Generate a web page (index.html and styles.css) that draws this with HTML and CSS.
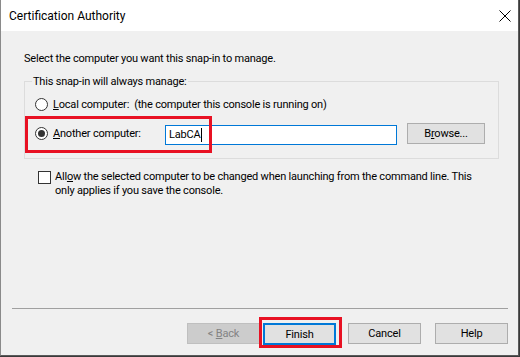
FILE: index.html
```html
<!DOCTYPE html>
<html lang="en">
<head>
  <meta charset="UTF-8" />
  <title>Certification Authority</title>
  <link rel="stylesheet" href="styles.css">
</head>
<body>
  <div class="window">
    <div class="titlebar">
      <span class="title">Certification Authority</span>
      <svg class="close" width="12" height="12" viewBox="0 0 12 12">
        <path d="M0.5 0.5 L11.5 11.5 M11.5 0.5 L0.5 11.5" stroke="#000" stroke-width="1" fill="none"/>
      </svg>
    </div>

    <div class="content">
      <p class="intro">Select the computer you want this snap-in to manage.</p>

      <fieldset class="group">
        <legend>This snap-in will always manage:</legend>

        <div class="option">
          <span class="radio"></span>
          <span class="label"><u>L</u>ocal computer:&nbsp; (the computer this console is running on)</span>
        </div>

        <div class="option option-remote">
          <span class="radio checked"></span>
          <span class="label label-fixed"><u>A</u>nother computer:</span>
          <div class="textbox">LabCA<span class="caret"></span></div>
          <button class="btn btn-browse">B<u>r</u>owse...</button>
          <!-- annotation -->
          <div class="highlight highlight-remote"></div>
        </div>
      </fieldset>

      <div class="check-row">
        <span class="checkbox"></span>
        <span class="check-text">All<u>o</u>w the selected computer to be changed when launching from the command line. This<br>only applies if you save the console.</span>
      </div>
    </div>

    <div class="footer">
      <div class="buttons">
        <button class="btn" disabled>&lt; <u>B</u>ack</button>
        <div class="finish-wrap">
          <button class="btn btn-default">Finish</button>
          <div class="highlight highlight-finish"></div>
        </div>
        <button class="btn btn-cancel">Cancel</button>
        <button class="btn btn-help">Help</button>
      </div>
    </div>
  </div>
</body>
</html>
```

FILE: styles.css
```css
body {
  margin: 0;
  padding: 0;
  background: #3a3a3a;
  font-family: Roboto, 'Liberation Sans', sans-serif;
  font-size: 11px;
  letter-spacing: -0.2px;
  color: #000;
}

.window {
  box-sizing: border-box;
  width: 519px;
  height: 356px;
  background: #f0f0f0;
  border-left: 1px solid #8a8a8a;
  border-right: 1px solid #5a5a5a;
  border-bottom: 1px solid #5a5a5a;
  display: flex;
  flex-direction: column;
}

.titlebar {
  height: 31px;
  background: #fff;
  display: flex;
  align-items: center;
  justify-content: space-between;
  padding: 0 8px 0 8px;
  flex-shrink: 0;
}

.title {
  font-size: 12px;
  letter-spacing: 0;
  line-height: 15px;
  padding-top: 1px;
}

.close {
  margin-right: -1px;
  margin-top: 1px;
}

.content {
  flex: 1;
  padding: 0 19px 0 23px;
}

.intro {
  margin: 20px 0 0 0;
  line-height: 15px;
}

.group {
  margin: 8px 0 0 0;
  padding: 8px 8px 14px 8px;
  border: 1px solid #dcdcdc;
  min-width: 0;
}

.group legend {
  padding: 0 1px;
  margin-left: -1px;
  line-height: 15px;
}

.option {
  display: flex;
  align-items: center;
  margin-left: 2px;
  line-height: 15px;
  position: relative;
  white-space: nowrap;
}

.option-remote {
  margin-top: 11px;
  height: 21px;
}

.radio {
  box-sizing: border-box;
  width: 13px;
  height: 13px;
  border: 1px solid #333;
  border-radius: 50%;
  background: #fff;
  margin-right: 5px;
  display: flex;
  align-items: center;
  justify-content: center;
  flex-shrink: 0;
}

.radio.checked::after {
  content: "";
  width: 7px;
  height: 7px;
  border-radius: 50%;
  background: #333;
}

.label-fixed {
  width: 112px;
  flex-shrink: 0;
}

.textbox {
  box-sizing: border-box;
  width: 232px;
  height: 20px;
  border: 1px solid #0078d7;
  background: #fff;
  padding: 1px 0 0 3px;
  line-height: 16px;
  margin-top: 2px;
  display: flex;
  align-items: center;
  flex-shrink: 0;
}

.caret {
  display: inline-block;
  width: 1px;
  height: 14px;
  background: #000;
  margin-left: 1px;
}

.btn {
  box-sizing: border-box;
  width: 73px;
  height: 21px;
  background: #e1e1e1;
  border: 1px solid #adadad;
  font-family: inherit;
  font-size: 11px;
  letter-spacing: -0.2px;
  color: #000;
  padding: 0;
  line-height: 17px;
  flex-shrink: 0;
}

.btn-browse {
  width: 78px;
  margin-left: 10px;
}

.btn[disabled] {
  background: #cccccc;
  border-color: #bfbfbf;
  color: #838383;
}

.btn-default {
  border: 2px solid #0078d7;
  height: 22px;
}

.highlight {
  position: absolute;
  border: 3px solid #e81123;
  pointer-events: none;
}

.highlight-remote {
  left: -10px;
  top: -7px;
  width: 181px;
  height: 31px;
}

.check-row {
  display: flex;
  align-items: flex-start;
  margin: 11px 0 0 14px;
}

.checkbox {
  box-sizing: border-box;
  width: 13px;
  height: 13px;
  border: 1px solid #333;
  background: #fff;
  margin-top: 1px;
  margin-right: 4px;
  flex-shrink: 0;
}

.check-text {
  line-height: 14px;
  white-space: nowrap;
}

.footer {
  margin: 0 10px 0 11px;
  border-top: 1px solid #a0a0a0;
  padding: 14px 0 10px 0;
}

.buttons {
  display: flex;
  justify-content: flex-end;
  align-items: flex-start;
}

.finish-wrap {
  position: relative;
  margin-left: 3px;
}

.highlight-finish {
  left: -4px;
  top: -6px;
  width: 77px;
  height: 25px;
}

.btn-cancel {
  margin-left: 12px;
}

.btn-help {
  margin-left: 14px;
}
```
